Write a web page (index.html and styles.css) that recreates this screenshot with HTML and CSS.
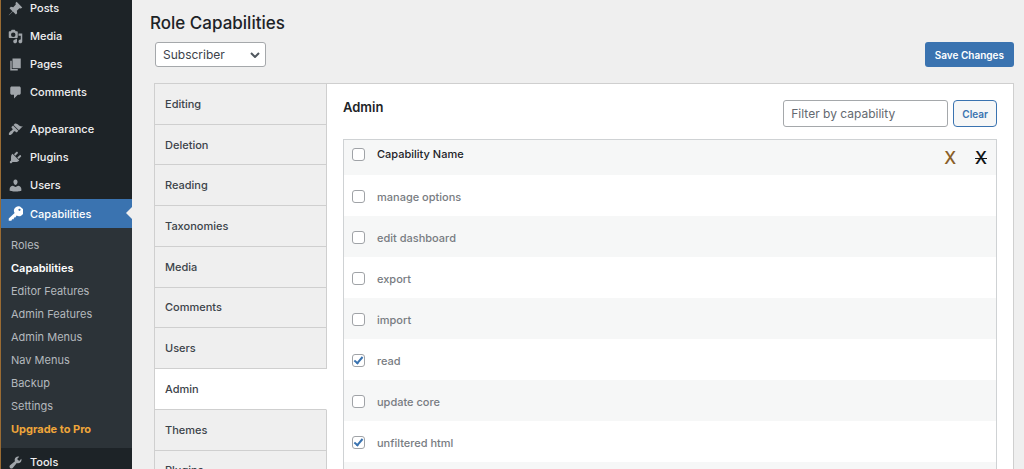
FILE: index.html
```html
<!DOCTYPE html>
<html lang="en">
<head>
    <meta charset="UTF-8">
    <meta name="viewport" content="width=device-width, initial-scale=1.0">
    <title>Role Capabilities</title>
    <link rel="stylesheet" href="styles.css">
</head>
<body>
    <nav class="sidebar">
        <ul class="menu">
            <li><a href="#"><svg viewBox="0 0 20 20"><path d="M11.500 1l7.500 7.500-1.800 1.500-2-.4-3.400 3.400.4 3.200-1.700 1.800-4-4L1.300 19 1 18.700 6 13.500l-4-4 1.800-1.700 3.200.4 3.400-3.400-.4-2z"/></svg>Posts</a></li>
            <li><a href="#"><svg viewBox="0 0 20 20"><path fill-rule="evenodd" d="M13 11V4c0-.55-.45-1-1-1h-1.670L9 1H5L3.670 3H2c-.55 0-1 .45-1 1v7c0 .55.45 1 1 1h10c.55 0 1-.45 1-1zM7 4.500a3 3 0 1 1 0 6 3 3 0 0 1 0-6zM14 6h5v10.500c0 1.380-1.120 2.500-2.500 2.500S14 17.880 14 16.500s1.120-2.500 2.500-2.500c.17 0 .34.02.5.050V9h-3V6zM10 13h2v3.500c0 1.380-1.120 2.500-2.500 2.500S7 17.880 7 16.500 8.120 14 9.500 14c.17 0 .34.02.5.050V13z"/></svg>Media</a></li>
            <li><a href="#"><svg viewBox="0 0 20 20"><path d="M6 15V2h11v13H6zm-1 1h8v2H3V5h2v11z"/></svg>Pages</a></li>
            <li><a href="#"><svg viewBox="0 0 20 20"><path d="M5 2h10c1.100 0 2 .9 2 2v7c0 1.100-.9 2-2 2h-2l-5 5v-5H5c-1.100 0-2-.9-2-2V4c0-1.100.9-2 2-2z"/></svg>Comments</a></li>
            <li class="gap"><a href="#"><svg viewBox="0 0 20 20"><path d="M14.480 11.060L7.410 3.990l1.500-1.500c.5-.56 2.300-.47 3.510.32 1.210.8 1.430 1.280 2.910 2.100 1.180.64 2.450 1.260 4.450.85zm-.71.71L6.700 4.700 4.930 6.470c-.39.39-.39 1.020 0 1.410l1.060 1.060c.39.39.39 1.030 0 1.420-.6.6-1.430 1.110-2.210 1.690-.35.26-.7.53-1.010.84C1.430 14.230.4 16.080 1.400 17.070c.99 1 2.840-.03 4.180-1.360.31-.31.58-.66.85-1.020.57-.78 1.080-1.610 1.690-2.210.39-.39 1.020-.39 1.410 0l1.060 1.060c.39.39 1.020.39 1.410 0z"/></svg>Appearance</a></li>
            <li><a href="#"><svg viewBox="0 0 20 20"><path d="M13.110 4.360L9.870 7.600 8 5.730l3.240-3.240c.35-.34 1.050-.2 1.560.32.52.51.66 1.210.31 1.550zm-8 1.770l.91-1.120 9.010 9.010-1.190.84c-.71.71-2.630 1.160-3.820 1.160H6.140L4.900 17.260c-.59.59-1.540.59-2.120 0-.59-.58-.59-1.530 0-2.120l1.240-1.240v-3.880c0-1.130.4-3.190 1.090-3.890zm7.260 3.970l3.240-3.240c.34-.35 1.040-.21 1.550.31.52.51.66 1.210.31 1.550l-3.240 3.250z"/></svg>Plugins</a></li>
            <li><a href="#"><svg viewBox="0 0 20 20"><path d="M10 9.250c-2.270 0-2.730-3.440-2.730-3.440C7 4.020 7.820 2 9.970 2c2.160 0 2.980 2.020 2.710 3.810 0 0-.41 3.440-2.680 3.440zM6.500 10.200L10 12l3.500-1.800c2.300.3 4.300 2.100 4.300 4.330v2.490s-3.950 1.130-7.800 1.130-7.800-1.130-7.800-1.130v-2.490c0-2.250 2-4.030 4.300-4.330z"/></svg>Users</a></li>
            <li class="current"><a href="#"><svg viewBox="0 0 20 20"><path fill-rule="evenodd" d="M18 2.200a5.900 5.900 0 0 0-9.200 7.200L1 16.800V19.500h3.500l1-1.800h2l.6-2.400h1.700l1.700-2.500A5.900 5.900 0 0 0 18 2.200zM15.300 3.600a1.500 1.500 0 1 1 0 3 1.500 1.500 0 0 1 0-3z"/></svg>Capabilities</a>
                <ul class="submenu">
                    <li><a href="#">Roles</a></li>
                    <li><a href="#" class="active">Capabilities</a></li>
                    <li><a href="#">Editor Features</a></li>
                    <li><a href="#">Admin Features</a></li>
                    <li><a href="#">Admin Menus</a></li>
                    <li><a href="#">Nav Menus</a></li>
                    <li><a href="#">Backup</a></li>
                    <li><a href="#">Settings</a></li>
                    <li><a href="#" class="upgrade">Upgrade to Pro</a></li>
                </ul>
            </li>
            <li><a href="#"><svg viewBox="0 0 20 20"><path d="M16.680 9.770c-1.340 1.340-3.300 1.670-4.950.99l-5.410 6.520c-.99.99-2.590.99-3.580 0s-.99-2.590 0-3.570l6.520-5.420c-.68-1.650-.35-3.610.99-4.950 1.280-1.280 3.120-1.620 4.720-1.060l-2.890 2.890 2.820 2.820 2.860-2.870c.53 1.580.18 3.390-1.080 4.650z"/></svg>Tools</a></li>
        </ul>
    </nav>

    <main class="content">
        <h1>Role Capabilities</h1>
        <div class="toolbar">
            <div class="select-wrap">
                <select class="role" aria-label="Role">
                    <option>Subscriber</option>
                    <option>Contributor</option>
                    <option>Editor</option>
                </select>
                <svg class="chevron" viewBox="0 0 10 6"><path d="M1 1l4 4 4-4"/></svg>
            </div>
            <button type="submit" class="save">Save Changes</button>
        </div>

        <div class="panel">
            <ul class="tabs">
                <li><a href="#">Editing</a></li>
                <li><a href="#">Deletion</a></li>
                <li><a href="#">Reading</a></li>
                <li><a href="#">Taxonomies</a></li>
                <li><a href="#">Media</a></li>
                <li><a href="#">Comments</a></li>
                <li><a href="#">Users</a></li>
                <li><a href="#" class="active">Admin</a></li>
                <li><a href="#">Themes</a></li>
                <li><a href="#">Plugins</a></li>
                <li><a href="#">Additional</a></li>
            </ul>
            <section class="caps">
                <div class="caps-head">
                    <h2>Admin</h2>
                    <div class="filter">
                        <input type="text" class="filter-text" placeholder="Filter by capability" aria-label="Filter by capability">
                        <button type="button" class="clear">Clear</button>
                    </div>
                </div>
                <table>
                    <thead>
                        <tr>
                            <th class="check"><input type="checkbox" id="all"></th>
                            <th><label for="all">Capability Name</label></th>
                            <th class="actions"><button type="button" class="neutral">X</button><button type="button" class="negate">X</button></th>
                        </tr>
                    </thead>
                    <tbody>
                        <tr><td class="check"><input type="checkbox" id="manage"></td><td colspan="2"><label for="manage">manage options</label></td></tr>
                        <tr><td class="check"><input type="checkbox" id="dashboard"></td><td colspan="2"><label for="dashboard">edit dashboard</label></td></tr>
                        <tr><td class="check"><input type="checkbox" id="export"></td><td colspan="2"><label for="export">export</label></td></tr>
                        <tr><td class="check"><input type="checkbox" id="import"></td><td colspan="2"><label for="import">import</label></td></tr>
                        <tr><td class="check"><input type="checkbox" id="read" checked></td><td colspan="2"><label for="read">read</label></td></tr>
                        <tr><td class="check"><input type="checkbox" id="core"></td><td colspan="2"><label for="core">update core</label></td></tr>
                        <tr><td class="check"><input type="checkbox" id="html" checked></td><td colspan="2"><label for="html">unfiltered html</label></td></tr>
                        <tr><td class="check"><input type="checkbox" id="upload"></td><td colspan="2"><label for="upload">unfiltered upload</label></td></tr>
                    </tbody>
                </table>
            </section>
        </div>
    </main>
</body>
</html>
```
FILE: styles.css
```css
* {
    box-sizing: border-box;
}

body {
    margin: 0;
    height: 100vh;
    overflow: hidden;
    display: flex;
    align-items: flex-start;
    background: #efefef;
    color: #3c434a;
    font-family: Inter, "Liberation Sans", sans-serif;
    font-size: 11px;
    line-height: 16px;
}

ul {
    list-style: none;
    margin: 0;
    padding: 0;
}

a {
    color: inherit;
    text-decoration: none;
}

button, input, select {
    font: inherit;
    margin: 0;
}

/* sidebar */
.sidebar {
    flex: 0 0 132px;
    min-height: 100vh;
    background: #1d2327;
    border-left: 1px solid #996b33;
}

.menu {
    margin-top: -6px;
    color: #f0f0f1;
    font-weight: 500;
}

.menu > li > a {
    display: flex;
    align-items: center;
    gap: 7px;
    height: 28px;
    padding-left: 7px;
    position: relative;
}

.menu svg {
    flex: none;
    width: 15px;
    height: 15px;
    fill: #a0a5aa;
}

.menu .gap {
    margin-top: 9px;
}

.menu .current > a {
    height: 29px;
    background: #3a73b0;
    color: #fff;
}

.menu .current svg {
    fill: #fff;
}

.menu .current > a::after {
    content: "";
    position: absolute;
    right: 0;
    top: 8px;
    border: 6px solid transparent;
    border-left-width: 0;
    border-right-color: #efefef;
}

.submenu {
    background: #2c3338;
    padding: 6px 0 7px;
    font-weight: 400;
    color: #b4b9be;
}

.submenu a {
    display: block;
    padding-left: 10px;
    line-height: 23px;
}

.submenu .active {
    color: #fff;
    font-weight: 600;
}

.submenu .upgrade {
    color: #efa63a;
    font-weight: 700;
}

/* page */
.content {
    flex: 1;
    padding: 12px 10px 0 22px;
}

h1 {
    margin: 0 0 7px -4px;
    font-size: 17px;
    line-height: 23px;
    font-weight: 500;
    color: #1d2327;
}

.toolbar {
    display: flex;
    justify-content: space-between;
    margin-bottom: 16px;
}

.select-wrap {
    position: relative;
    margin-left: 1px;
}

.role {
    appearance: none;
    width: 111px;
    height: 25px;
    padding: 0 7px;
    border: 1px solid #a5a8ab;
    border-radius: 3px;
    background: #fff;
    color: #3c434a;
    font-size: 12px;
}

.chevron {
    position: absolute;
    right: 6px;
    top: 10px;
    width: 10px;
    height: 6px;
    fill: none;
    stroke: #50575e;
    stroke-width: 2;
    pointer-events: none;
}

.save {
    height: 25px;
    padding: 0 10px;
    border: 0;
    border-radius: 3px;
    background: #3a73b0;
    color: #fff;
    font-size: 10px;
    font-weight: 600;
}

.panel {
    display: flex;
    border: 1px solid #cfcfcf;
    background: #fff;
}

.tabs {
    flex: 0 0 172px;
    display: grid;
    grid-auto-rows: 1fr;
    font-weight: 500;
}

.tabs a {
    display: flex;
    align-items: center;
    height: 100%;
    padding-left: 10px;
    background: #efefef;
    border-right: 1px solid #cfcfcf;
    border-bottom: 1px solid #cfcfcf;
}

.tabs .active {
    background: #fff;
    border-right-color: #fff;
}

.caps {
    flex: 1;
    padding: 16px 16px 28px;
}

.caps-head {
    display: flex;
    justify-content: space-between;
    margin-bottom: 12px;
}

h2 {
    margin: 0;
    font-size: 13px;
    line-height: 15px;
    font-weight: 600;
    color: #1d2327;
}

.filter {
    display: flex;
    gap: 5px;
}

.filter-text {
    width: 165px;
    height: 27px;
    padding: 0 7px;
    border: 1px solid #a5a8ab;
    border-radius: 3px;
    background: #fff;
    font-size: 12px;
}

.filter-text::placeholder {
    color: #646970;
    opacity: 1;
}

.clear {
    height: 27px;
    padding: 0 8px;
    border: 1px solid #3a73b0;
    border-radius: 4px;
    background: #f6f7f7;
    color: #3a73b0;
    font-size: 10px;
    font-weight: 600;
}

table {
    width: 100%;
    border: 1px solid #cfd2d4;
    border-collapse: separate;
    border-spacing: 0;
}

th, td {
    padding: 0;
    text-align: left;
}

th {
    height: 35px;
    padding-top: 6px;
    background: #f6f7f7;
    font-weight: 500;
    color: #1d2327;
    vertical-align: top;
}

td {
    height: 41px;
    padding-top: 2px;
    color: #787c82;
    font-weight: 500;
}

tbody tr:nth-child(even) {
    background: #f6f7f7;
}

.check {
    width: 33px;
    padding-left: 8px;
}

.check input {
    appearance: none;
    display: flex;
    align-items: center;
    justify-content: center;
    width: 13px;
    height: 13px;
    border: 1px solid #a0a3a7;
    border-radius: 3px;
    background: #fff;
}

th.check {
    padding-top: 8px;
}

.check input:checked::before {
    content: "";
    box-sizing: border-box;
    width: 5px;
    height: 9px;
    margin-bottom: 2px;
    border: solid #3a73b0;
    border-width: 0 2px 2px 0;
    transform: rotate(40deg);
}

.actions {
    width: 90px;
    padding: 8px 9px 0 0;
    text-align: right;
    white-space: nowrap;
}

.actions button {
    padding: 0;
    border: 0;
    background: none;
    font-size: 17px;
    line-height: 20px;
}

.actions .neutral {
    margin-right: 19px;
    color: #8a5f28;
}

.negate {
    color: #101517;
    text-decoration: line-through 1px;
}
```
